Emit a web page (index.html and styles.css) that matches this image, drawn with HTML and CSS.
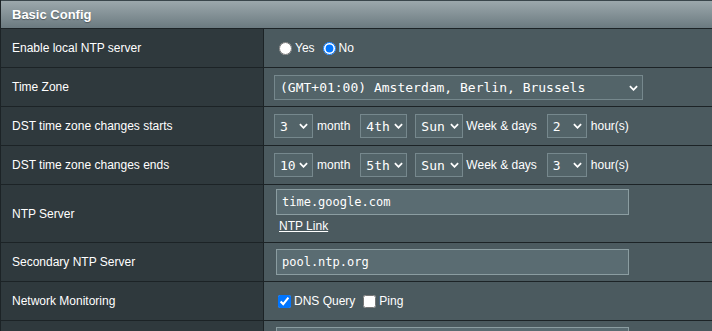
FILE: index.html
```html
<!DOCTYPE html>
<html lang="en">
<head>
  <meta charset="UTF-8">
  <title>Basic Config</title>
  <link rel="stylesheet" href="styles.css">
</head>
<body>

  <div class="config">
    <div class="config-head">Basic Config</div>

    <!-- NTP server toggle -->
    <div class="row">
      <div class="label">Enable local NTP server</div>
      <div class="value">
        <label class="opt"><input type="radio" name="ntpd">Yes</label>
        <label class="opt"><input type="radio" name="ntpd" checked>No</label>
      </div>
    </div>

    <div class="row">
      <div class="label">Time Zone</div>
      <div class="value">
        <span class="select s-tz">
          <select>
            <option>(GMT+01:00) Amsterdam, Berlin, Brussels</option>
          </select>
          <svg class="chev" viewBox="0 0 10 6"><path d="M1 1 L5 5 L9 1"/></svg>
        </span>
      </div>
    </div>

    <div class="row">
      <div class="label">DST time zone changes starts</div>
      <div class="value">
        <span class="select s-num">
          <select><option>3</option></select>
          <svg class="chev" viewBox="0 0 10 6"><path d="M1 1 L5 5 L9 1"/></svg>
        </span>
        <span class="unit">month</span>
        <span class="select s-wk">
          <select><option>4th</option></select>
          <svg class="chev" viewBox="0 0 10 6"><path d="M1 1 L5 5 L9 1"/></svg>
        </span>
        <span class="select s-day">
          <select><option>Sun</option></select>
          <svg class="chev" viewBox="0 0 10 6"><path d="M1 1 L5 5 L9 1"/></svg>
        </span>
        <span class="unit tight">Week &amp; days</span>
        <span class="select s-hr">
          <select><option>2</option></select>
          <svg class="chev" viewBox="0 0 10 6"><path d="M1 1 L5 5 L9 1"/></svg>
        </span>
        <span class="unit">hour(s)</span>
      </div>
    </div>

    <div class="row">
      <div class="label">DST time zone changes ends</div>
      <div class="value">
        <span class="select s-num">
          <select><option>10</option></select>
          <svg class="chev" viewBox="0 0 10 6"><path d="M1 1 L5 5 L9 1"/></svg>
        </span>
        <span class="unit">month</span>
        <span class="select s-wk">
          <select><option>5th</option></select>
          <svg class="chev" viewBox="0 0 10 6"><path d="M1 1 L5 5 L9 1"/></svg>
        </span>
        <span class="select s-day">
          <select><option>Sun</option></select>
          <svg class="chev" viewBox="0 0 10 6"><path d="M1 1 L5 5 L9 1"/></svg>
        </span>
        <span class="unit tight">Week &amp; days</span>
        <span class="select s-hr">
          <select><option>3</option></select>
          <svg class="chev" viewBox="0 0 10 6"><path d="M1 1 L5 5 L9 1"/></svg>
        </span>
        <span class="unit">hour(s)</span>
      </div>
    </div>

    <div class="row row-tall">
      <div class="label">NTP Server</div>
      <div class="value stack">
        <input class="text" type="text" value="time.google.com">
        <a class="ntp-link" href="#">NTP Link</a>
      </div>
    </div>

    <div class="row">
      <div class="label">Secondary NTP Server</div>
      <div class="value">
        <input class="text" type="text" value="pool.ntp.org">
      </div>
    </div>

    <div class="row">
      <div class="label">Network Monitoring</div>
      <div class="value">
        <label class="opt chk"><input type="checkbox" checked>DNS Query</label>
        <label class="opt chk"><input type="checkbox">Ping</label>
      </div>
    </div>

    <!-- next row, only its top edge is in view -->
    <div class="row">
      <div class="label"></div>
      <div class="value">
        <input class="text" type="text" value="">
      </div>
    </div>
  </div>

</body>
</html>
```

FILE: styles.css
```css
* {
  box-sizing: border-box;
}

body {
  margin: 0;
  background: #4b5a5f;
  color: #fff;
  font-family: "Liberation Sans", Arial, sans-serif;
  font-size: 12px;
  overflow: hidden;
}

.config {
  border-left: 1px solid #1c2326;
}

.config-head {
  height: 29px;
  border-top: 1px solid #3a464b;
  border-bottom: 1px solid #1c2326;
  background: linear-gradient(#9ca8ac, #6b7a80);
  padding-left: 11px;
  font-size: 13px;
  font-weight: bold;
  line-height: 27px;
  text-shadow: 0 1px 1px rgba(0, 0, 0, 0.35);
}

.row {
  display: grid;
  grid-template-columns: 263px 1fr;
  height: 39px;
  border-bottom: 1px solid #1c2326;
}

.row-tall {
  height: 58px;
}

.label {
  display: flex;
  align-items: center;
  padding-left: 11px;
  background: #2f393d;
  border-right: 1px solid #1c2326;
}

.value {
  display: flex;
  align-items: center;
  padding-left: 10px;
  background: #4b5a5f;
}

.value.stack {
  flex-direction: column;
  align-items: flex-start;
  justify-content: flex-start;
  padding-top: 4px;
}

/* radio / checkbox labels */
.opt {
  display: inline-flex;
  align-items: center;
  margin-right: 3px;
}

.opt input {
  width: 13px;
  height: 13px;
  margin: 0 3px 0 5px;
}

.opt.chk {
  margin-right: 4px;
}

.opt.chk input {
  margin: 0 3px 0 4px;
}

/* selects */
.select {
  position: relative;
  display: inline-block;
  height: 24px;
}

.select select {
  appearance: none;
  -webkit-appearance: none;
  width: 100%;
  height: 100%;
  margin: 0;
  padding: 0 0 0 5px;
  background: #536469;
  border: 1px solid #76888d;
  border-radius: 0;
  color: #fff;
  font-family: "DejaVu Sans Mono", "Liberation Mono", monospace;
  font-size: 13px;
  outline: none;
}

.chev {
  position: absolute;
  right: 5px;
  top: 50%;
  width: 9px;
  height: 6px;
  margin-top: -3px;
  fill: none;
  stroke: #fff;
  stroke-width: 2;
  pointer-events: none;
}

.s-tz {
  width: 369px;
  height: 25px;
  margin-top: 1px;
}

.s-num {
  width: 39px;
}

.s-wk {
  width: 47px;
  margin-left: 10px;
}

.s-day {
  width: 48px;
  margin-left: 8px;
}

.s-hr {
  width: 40px;
  margin-left: 10px;
}

.s-wk .chev,
.s-day .chev {
  right: 4px;
}

.unit {
  margin-left: 4px;
}

.unit.tight {
  margin-left: 3px;
}

/* text inputs */
.text {
  width: 353px;
  height: 26px;
  margin: 0 0 0 2px;
  padding: 0 5px;
  background: #5a6c72;
  border: 1px solid #8b9da1;
  color: #fff;
  font-family: "DejaVu Sans Mono", "Liberation Mono", monospace;
  font-size: 12px;
  outline: none;
}

.ntp-link {
  margin: 4px 0 0 5px;
  color: #fff;
  line-height: 14px;
  text-decoration: underline;
}
```
